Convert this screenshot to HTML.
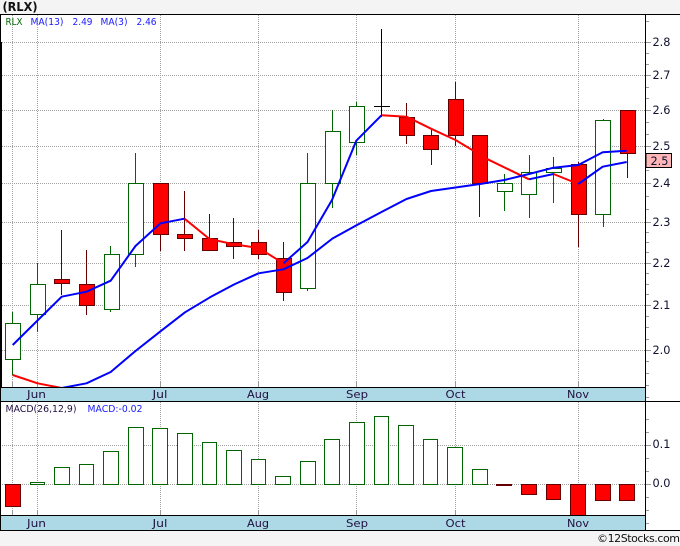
<!DOCTYPE html>
<html><head><meta charset="utf-8"><style>
html,body{margin:0;padding:0;width:680px;height:546px;overflow:hidden;background:#f4f4f4}
svg{display:block}
text{font-family:"DejaVu Sans","Liberation Sans",sans-serif}
.a{font-size:11.3px;fill:#101030}
.m{font-size:11px;fill:#201040;text-anchor:middle}
.g{fill:#fff;stroke:#006400;stroke-width:1}
.r{fill:#f00;stroke:#600;stroke-width:1}
.wg{stroke:#006400;stroke-width:1}
.wr{stroke:#600;stroke-width:1}
</style></head><body>
<svg width="680" height="546" viewBox="0 0 680 546" xmlns="http://www.w3.org/2000/svg">
<defs><clipPath id="c"><rect x="0" y="15" width="645" height="372"/></clipPath></defs>
<rect x="0" y="0" width="680" height="14" fill="#f4f4f4"/>
<rect x="0" y="14" width="680" height="516" fill="#fff"/>
<rect x="0" y="387" width="645" height="14" fill="#add8e6"/>
<rect x="0" y="515" width="645" height="15" fill="#add8e6"/>
<text x="2.5" y="11" font-size="12.5" font-weight="bold" fill="#111" textLength="35" lengthAdjust="spacingAndGlyphs">(RLX)</text>

<!-- grid -->
<g stroke="#a2a2a2" stroke-width="1" stroke-dasharray="1 1" fill="none">
<path d="M2 42.5H645M2 75.5H645M2 110.5H645M2 146.5H645M2 183.5H645M2 222.5H645M2 263.5H645M2 305.5H645M2 350.5H645M2 445.5H645M2 484.5H645"/>
<path d="M12.5 15V387M37.5 15V387M160.5 15V387M258.5 15V387M356.5 15V387M455.5 15V387M578.5 15V387"/>
<path d="M12.5 402V515M37.5 402V515M160.5 402V515M258.5 402V515M356.5 402V515M455.5 402V515M578.5 402V515"/>
</g>
<path stroke="#999" fill="none" d="M12.5 382V387M37.5 382V387M160.5 382V387M258.5 382V387M356.5 382V387M455.5 382V387M578.5 382V387M12.5 510V515M37.5 510V515M160.5 510V515M258.5 510V515M356.5 510V515M455.5 510V515M578.5 510V515"/>
<!-- axis ticks -->
<path stroke="#999" fill="none" d="M646 21.5H649M646 53.5H649M646 64.5H649M646 87.5H649M646 98.5H649M646 122.5H649M646 134.5H649M646 170.5H649M646 196.5H649M646 209.5H649M646 232.5H649M646 242.5H649M646 252.5H649M646 273.5H649M646 284.5H649M646 294.5H649M646 316.5H649M646 327.5H649M646 339.5H649M646 361.5H649M646 373.5H649M646 385.5H649M646 397.5H649M646 419.5H649M646 432.5H649M646 458.5H649M646 471.5H649M646 497.5H649M646 510.5H649M646 523.5H649M646 42.5H651M646 75.5H651M646 110.5H651M646 146.5H651M646 183.5H651M646 222.5H651M646 263.5H651M646 305.5H651M646 350.5H651M646 445.5H651M646 484.5H651"/>

<!-- wicks -->
<path class="wg" d="M12.5 312V375M37.5 263V332M110.5 246V312M135.5 153V267M307.5 153V291M332.5 110V208M356.5 102V155M504.5 174V211M529.5 155V218M553.5 157V203M603.5 119V227"/>
<path class="wr" d="M61.5 230V295M86.5 250V315M160.5 183V251M184.5 191V251M209.5 214V251M233.5 218V259M258.5 230V259M283.5 242V301M406.5 103V144M431.5 130V165M455.5 82V146M479.5 135V217M578.5 162V247M627.5 110V178"/>
<path stroke="#000" fill="none" d="M381.5 29V117M374 106.5H390"/>

<!-- candles -->
<rect class="g" x="5.5" y="323.5" width="15" height="36"/>
<rect class="g" x="30.5" y="284.5" width="15" height="30"/>
<rect class="g" x="104.5" y="254.5" width="15" height="55"/>
<rect class="g" x="128.5" y="183.5" width="15" height="71"/>
<rect class="g" x="300.5" y="183.5" width="15" height="105"/>
<rect class="g" x="325.5" y="131.5" width="15" height="52"/>
<rect class="g" x="349.5" y="106.5" width="15" height="36"/>
<rect class="g" x="497.5" y="183.5" width="15" height="8"/>
<rect class="g" x="521.5" y="172.5" width="15" height="22"/>
<rect class="g" x="546.5" y="168.5" width="15" height="4"/>
<rect class="g" x="595.5" y="120.5" width="15" height="94"/>
<rect class="r" x="54.5" y="279.5" width="15" height="4"/>
<rect class="r" x="79.5" y="284.5" width="15" height="21"/>
<rect class="r" x="153.5" y="183.5" width="15" height="51"/>
<rect class="r" x="177.5" y="234.5" width="15" height="4"/>
<rect class="r" x="202.5" y="238.5" width="15" height="12"/>
<rect class="r" x="226.5" y="242.5" width="15" height="4"/>
<rect class="r" x="251.5" y="242.5" width="15" height="12"/>
<rect class="r" x="276.5" y="258.5" width="15" height="34"/>
<rect class="r" x="399.5" y="117.5" width="15" height="18"/>
<rect class="r" x="423.5" y="135.5" width="15" height="14"/>
<rect class="r" x="448.5" y="99.5" width="15" height="36"/>
<rect class="r" x="472.5" y="135.5" width="15" height="48"/>
<rect class="r" x="571.5" y="164.5" width="15" height="50"/>
<rect class="r" x="620.5" y="110.5" width="15" height="43"/>

<!-- moving averages -->
<g fill="none" stroke-width="2" stroke-linejoin="round" clip-path="url(#c)">
<path stroke="#f00" d="M12.7 375L37.5 383.3L61.7 388"/>
<path stroke="#f00" d="M184.5 218.7L209.5 239L234 244.3L258.5 248L283.5 263.3"/>
<path stroke="#f00" d="M381.5 115.3L406.5 116.7L431 128.7L455.5 140L487.7 159.3L529 179.3"/>
<path stroke="#f00" d="M553.5 174L578.3 184"/>
<path stroke="#00f" d="M61.7 388L86.5 383.3L110.7 372L135.5 351L160 331.7L185 312.3L210 297.3L234 284.5L258.5 273.3L283.5 269.3L307.5 258L332.5 238.5L357 225L381.5 212L406.5 199L431 191L455.5 187.5L480 184L504.5 180L529 174L553.5 167.7L578.3 165L602.7 152.3L626.7 150.7"/>
<path stroke="#00f" d="M12.7 345L37.5 320.5L61.7 296.7L86.5 291.7L110.7 280.7L135.5 246L160.5 223.3L184.5 218.7"/>
<path stroke="#00f" d="M283.5 263.3L307.5 242L332 200L356.3 140.7L381.5 115.3"/>
<path stroke="#00f" d="M529 179.3L553.5 174"/>
<path stroke="#00f" d="M578.3 184L602.7 166.7L626.7 162"/>
</g>

<!-- MACD -->
<rect class="r" x="5.5" y="484.5" width="15" height="22"/>
<rect class="g" x="30.5" y="482.5" width="14" height="2"/>
<rect class="g" x="54.5" y="467.5" width="15" height="17"/>
<rect class="g" x="79.5" y="464.5" width="14" height="20"/>
<rect class="g" x="103.5" y="451.5" width="15" height="33"/>
<rect class="g" x="128.5" y="427.5" width="15" height="57"/>
<rect class="g" x="152.5" y="428.5" width="15" height="56"/>
<rect class="g" x="177.5" y="433.5" width="15" height="51"/>
<rect class="g" x="202.5" y="442.5" width="14" height="42"/>
<rect class="g" x="226.5" y="450.5" width="15" height="34"/>
<rect class="g" x="251.5" y="459.5" width="14" height="25"/>
<rect class="g" x="275.5" y="476.5" width="15" height="8"/>
<rect class="g" x="300.5" y="461.5" width="15" height="23"/>
<rect class="g" x="324.5" y="439.5" width="15" height="45"/>
<rect class="g" x="349.5" y="422.5" width="15" height="62"/>
<rect class="g" x="374.5" y="416.5" width="14" height="68"/>
<rect class="g" x="398.5" y="425.5" width="15" height="59"/>
<rect class="g" x="423.5" y="439.5" width="14" height="45"/>
<rect class="g" x="447.5" y="447.5" width="15" height="37"/>
<rect class="g" x="472.5" y="469.5" width="15" height="15"/>
<rect class="r" x="496.5" y="484.5" width="15" height="1"/>
<rect class="r" x="521.5" y="484.5" width="15" height="10"/>
<rect class="r" x="546.5" y="484.5" width="14" height="15"/>
<rect class="r" x="570.5" y="484.5" width="15" height="31"/>
<rect class="r" x="595.5" y="484.5" width="15" height="16"/>
<rect class="r" x="619.5" y="484.5" width="15" height="16"/>

<!-- frame -->
<path stroke="#000" fill="none" d="M0 14.5H680M0 387.5H645.5M0 401.5H680M0 515.5H645.5M0 530.5H680M645.5 14V531M.5 14V531"/>
<path stroke="#000" fill="none" d="M1.5 42V387"/>

<!-- legends -->
<text x="5.5" y="25" font-size="10" fill="#006400" textLength="17" lengthAdjust="spacingAndGlyphs">RLX</text>
<text x="30.5" y="25" font-size="10" fill="#1a1aff" textLength="33" lengthAdjust="spacingAndGlyphs">MA(13)</text>
<text x="72.5" y="25" font-size="10" fill="#1a1aff" textLength="20" lengthAdjust="spacingAndGlyphs">2.49</text>
<text x="100.5" y="25" font-size="10" fill="#1a1aff" textLength="27" lengthAdjust="spacingAndGlyphs">MA(3)</text>
<text x="136.5" y="25" font-size="10" fill="#1a1aff" textLength="20" lengthAdjust="spacingAndGlyphs">2.46</text>
<text x="5.5" y="412" font-size="10" fill="#201040" textLength="71" lengthAdjust="spacingAndGlyphs">MACD(26,12,9)</text>
<text x="87.5" y="412" font-size="10" fill="#1a1aff" textLength="55" lengthAdjust="spacingAndGlyphs">MACD:-0.02</text>

<!-- axis labels -->
<text class="a" x="652.5" y="46">2.8</text>
<text class="a" x="652.5" y="79">2.7</text>
<text class="a" x="652.5" y="114">2.6</text>
<text class="a" x="652.5" y="150">2.5</text>
<rect x="646" y="153.5" width="25.5" height="14" fill="#ffb6b6" stroke="#000"/>
<text class="a" x="650.5" y="165">2.5</text>
<text class="a" x="652.5" y="187">2.4</text>
<text class="a" x="652.5" y="226">2.3</text>
<text class="a" x="652.5" y="267">2.2</text>
<text class="a" x="652.5" y="309">2.1</text>
<text class="a" x="652.5" y="354">2.0</text>
<text class="a" x="652.5" y="448">0.1</text>
<text class="a" x="652.5" y="487">0.0</text>

<!-- month labels -->
<text class="m" x="36.5" y="398" textLength="19" lengthAdjust="spacingAndGlyphs">Jun</text>
<text class="m" x="160" y="398" textLength="15" lengthAdjust="spacingAndGlyphs">Jul</text>
<text class="m" x="258" y="398" textLength="22" lengthAdjust="spacingAndGlyphs">Aug</text>
<text class="m" x="357" y="398" textLength="22" lengthAdjust="spacingAndGlyphs">Sep</text>
<text class="m" x="455.5" y="398" textLength="20" lengthAdjust="spacingAndGlyphs">Oct</text>
<text class="m" x="578" y="398" textLength="22" lengthAdjust="spacingAndGlyphs">Nov</text>
<text class="m" x="36.5" y="527" textLength="19" lengthAdjust="spacingAndGlyphs">Jun</text>
<text class="m" x="160" y="527" textLength="15" lengthAdjust="spacingAndGlyphs">Jul</text>
<text class="m" x="258" y="527" textLength="22" lengthAdjust="spacingAndGlyphs">Aug</text>
<text class="m" x="357" y="527" textLength="22" lengthAdjust="spacingAndGlyphs">Sep</text>
<text class="m" x="455.5" y="527" textLength="20" lengthAdjust="spacingAndGlyphs">Oct</text>
<text class="m" x="578" y="527" textLength="22" lengthAdjust="spacingAndGlyphs">Nov</text>

<text x="597" y="542" font-size="11" fill="#111" textLength="83" lengthAdjust="spacing">©12Stocks.com</text>
</svg>
</body></html>
